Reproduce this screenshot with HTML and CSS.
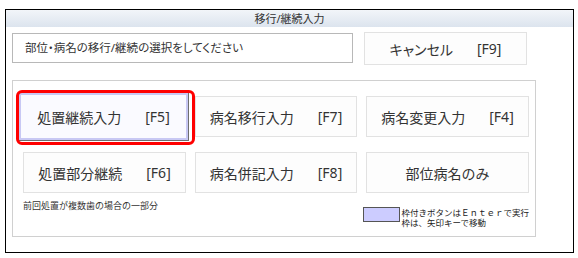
FILE: index.html
```html
<!DOCTYPE html>
<html lang="ja">
<head>
  <meta charset="UTF-8">
  <title>移行/継続入力</title>
  <link rel="stylesheet" href="styles.css">
</head>
<body>
  <div class="window">
    <div class="titlebar">移行/継続入力</div>
    <div class="top-row">
      <div class="message">部位・病名の移行/継続の選択をしてください</div>
      <button class="btn cancel"><span>キャンセル</span><span>[F9]</span></button>
    </div>
    <div class="group">
      <div class="grid">
        <button class="btn focused"><span>処置継続入力</span><span>[F5]</span></button>
        <button class="btn"><span>病名移行入力</span><span>[F7]</span></button>
        <button class="btn"><span>病名変更入力</span><span>[F4]</span></button>
        <button class="btn"><span>処置部分継続</span><span>[F6]</span></button>
        <button class="btn"><span>病名併記入力</span><span>[F8]</span></button>
        <button class="btn"><span>部位病名のみ</span></button>
        <div class="note">前回処置が複数歯の場合の一部分</div>
        <div class="legend">
          <div class="legend-box"></div>
          <div class="legend-text">
            <div>枠付きボタンはＥｎｔｅｒで実行</div>
            <div>枠は、矢印キーで移動</div>
          </div>
        </div>
      </div>
    </div>
  </div>
</body>
</html>
```

FILE: styles.css
```css
body {
  margin: 0;
  background: #fff;
  font-family: "Noto Sans", "Noto Sans CJK JP", sans-serif;
  color: #333;
}
.window {
  margin: 9px 0 0 5px;
  width: 569px;
  height: 244px;
  box-sizing: border-box;
  border: 1px solid #000;
  background: #fff;
}
.titlebar {
  height: 17px;
  line-height: 17px;
  text-align: center;
  font-size: 11px;
  background: linear-gradient(#f2f5f9, #dce4ee);
}
.top-row {
  display: flex;
  align-items: flex-start;
  gap: 11px;
  padding: 5px 0 0 6px;
}
.message {
  width: 341px;
  height: 30px;
  margin-top: 1px;
  box-sizing: border-box;
  border: 1px solid #b8b8b8;
  padding-left: 12px;
  line-height: 28px;
  font-size: 11.5px;
  font-feature-settings: "palt";
}
.btn {
  display: flex;
  justify-content: center;
  align-items: center;
  gap: 24px;
  box-sizing: border-box;
  border: 1px solid #e2e2e2;
  background: #fdfdfd;
  color: #333;
  font-family: inherit;
  font-size: 14px;
  padding: 0;
}
.cancel {
  width: 163px;
  height: 33px;
  font-feature-settings: "palt";
}
.group {
  width: 524px;
  height: 157px;
  margin: 15px 0 0 6px;
  box-sizing: border-box;
  border: 1px solid #d0d0d0;
  padding: 15px 0 0 10px;
}
.grid {
  display: grid;
  grid-template-columns: 163px 162px 163px;
  grid-template-rows: 41px 41px auto;
  column-gap: 9px;
  row-gap: 15px;
}
.grid .note {
  grid-column: 1 / 3;
  margin-top: -8px;
  font-size: 9px;
  line-height: 11px;
}
.focused {
  position: relative;
  margin: -4px -3px -4px -5px;
  border-color: #c8c8f4 #6e6e6e #6e6e6e #c8c8f4;
  box-shadow: inset 2px 2px 0 #c8c8f4, inset -2px -2px 0 #c8c8f4;
  background: #fafaff;
}
.focused::after {
  content: "";
  position: absolute;
  left: -3px;
  top: -3px;
  right: -7px;
  bottom: -5px;
  border: 3px solid #f00;
  border-radius: 6px;
}
.legend {
  display: flex;
  align-items: flex-start;
  margin: -1px 0 0 -3px;
}
.legend-box {
  width: 41px;
  height: 15px;
  box-sizing: border-box;
  border: 1px solid #555;
  background: #ccccff;
}
.legend-text {
  margin: 1px 0 0 1px;
  font-size: 8.5px;
  line-height: 10px;
  color: #222;
  white-space: nowrap;
}
.legend-text div {
  height: 10px;
}
```
